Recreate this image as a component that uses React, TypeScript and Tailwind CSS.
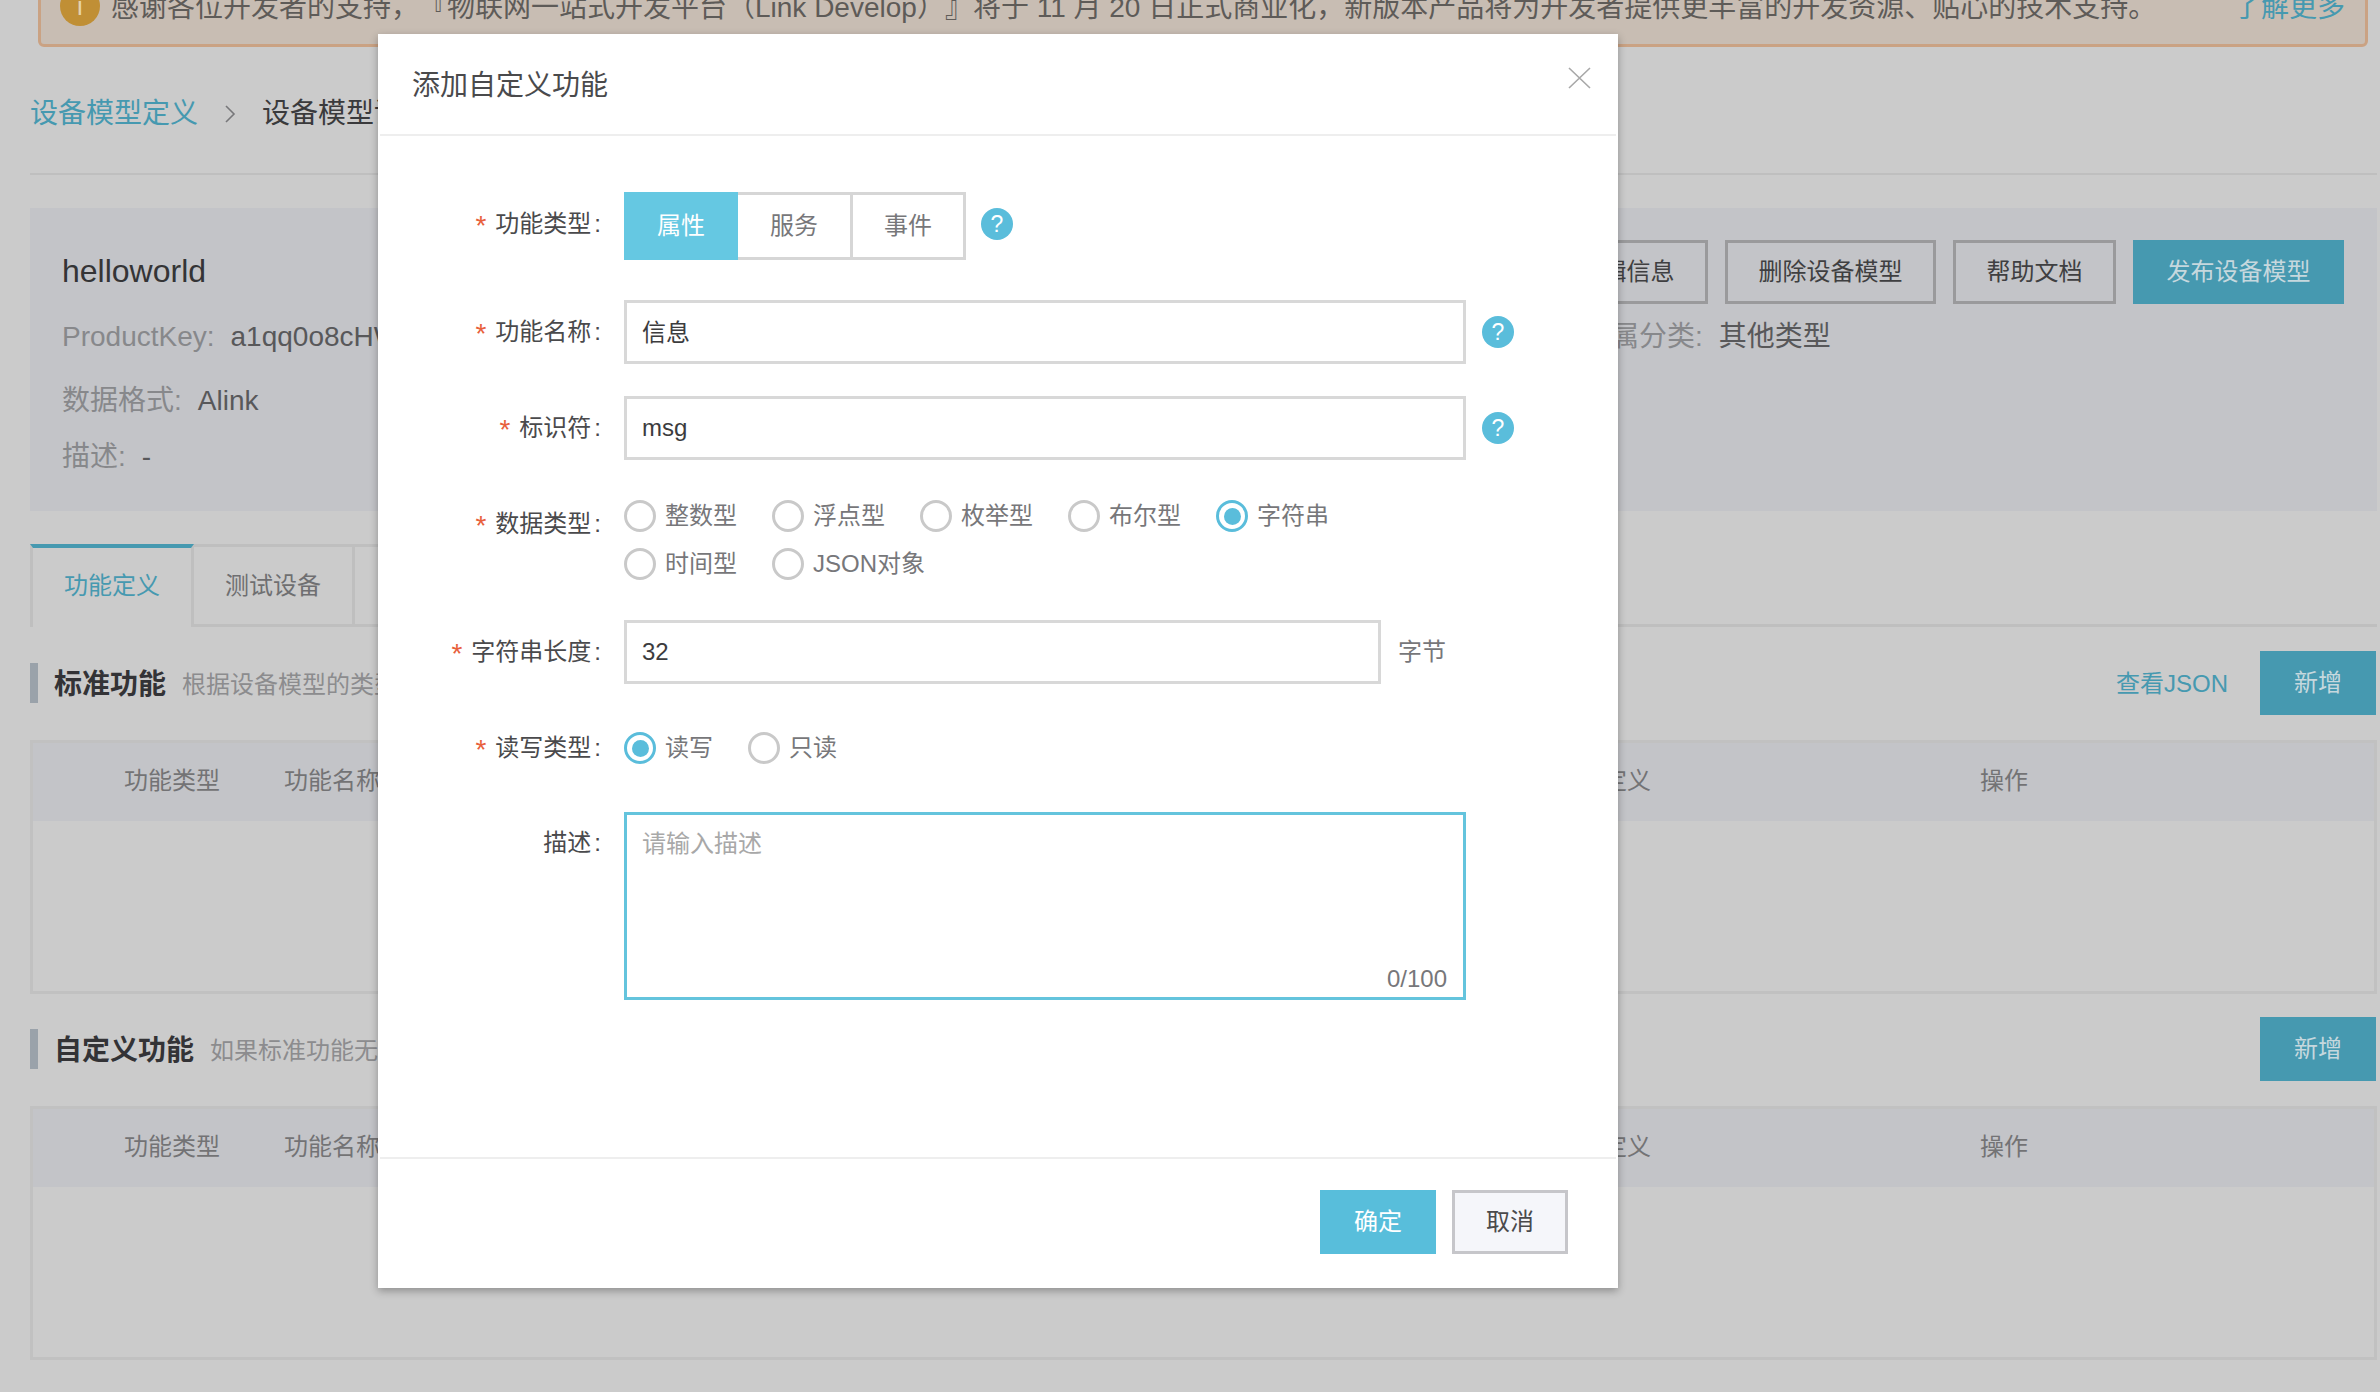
import React from "react";

const Star = () => <span className="mr-[9px] text-[28px] leading-[28px] pt-[4px] text-[#e8603c]">*</span>;

function FormRow({ label, required, labelClass, className, children }: { label: string; required?: boolean; labelClass: string; className: string; children: React.ReactNode }) {
  return (
    <div className={`flex items-start ${className}`}>
      <div className={`flex w-[246px] shrink-0 items-center justify-end pr-[23px] text-[24px] text-[#4a4a4c] ${labelClass}`}>
        {required && <Star />}
        <span>{label}</span>
        <span className="ml-[3px]">:</span>
      </div>
      {children}
    </div>
  );
}

function Help({ className }: { className: string }) {
  return <div className={`flex h-[32px] w-[32px] shrink-0 items-center justify-center rounded-full bg-[#5abddb] text-[23px] leading-none text-white ${className}`}>?</div>;
}

function Radio({ label, checked, className }: { label: string; checked?: boolean; className: string }) {
  return (
    <label className={`flex h-[32px] items-center ${className}`}>
      <span className={`flex h-[32px] w-[32px] shrink-0 items-center justify-center rounded-full border-[3px] ${checked ? "border-[#5abddb]" : "border-[#c9c9c9]"}`}>
        {checked && <span className="h-[17px] w-[17px] rounded-full bg-[#5abddb]" />}
      </span>
      <span className="ml-[9px] whitespace-nowrap text-[24px] text-[#77777a]">{label}</span>
    </label>
  );
}

function Section({ title, sub, link, titleClass, subClass, rootClass }: { title: string; sub: string; link?: boolean; titleClass: string; subClass: string; rootClass: string }) {
  const headers: [string, string][] = [
    ["功能类型", "w-[160px]"],
    ["功能名称", "w-[401px]"],
    ["标识符", "w-[435px]"],
    ["数据类型", "w-[435px]"],
    ["数据定义", "w-[425px]"],
    ["操作", "w-[100px]"],
  ];
  return (
    <section className={rootClass}>
      <div className="flex h-[64px] items-center">
        <div className="h-[40px] w-[8px] bg-[#9aa2aa]" />
        <h2 className={`pt-[3px] text-[28px] font-bold text-[#333336] ${titleClass}`}>{title}</h2>
        <span className={`pt-[3px] text-[24px] text-[#8c8c8e] ${subClass}`}>{sub}</span>
        <div className="ml-auto flex items-center">
          {link && <a className="mr-[32px] pt-[1px] text-[24px] text-[#4699b0]">查看JSON</a>}
          <button className="mr-[1px] h-[64px] w-[116px] bg-[#4699b0] text-[24px] text-[#c6d8de]">新增</button>
        </div>
      </div>
      <div className="mt-[25px] h-[254px] border-[3px] border-[#c1c1c1]">
        <div className="flex h-[78px] items-center bg-[#c3c4c8] pb-[3px] pl-[91px] text-[24px] text-[#737375]">
          {headers.map(([h, w]) => (
            <div key={h} className={`shrink-0 ${w}`}>{h}</div>
          ))}
        </div>
      </div>
    </section>
  );
}

export default function App() {
  return (
    <div className="relative h-[1392px] w-[2380px] overflow-hidden bg-[#cbcbcb] font-['Liberation_Sans','Noto_Sans_CJK_SC',sans-serif] [text-spacing-trim:space-all]">
      <div className="pl-[30px] pr-[3px]">
        <div className="ml-[8px] mr-[9px] -mt-[30px] flex h-[77px] items-center rounded-[6px] border-[3px] border-[#caa283] bg-[#c8bdb3] pb-[5px] pl-[19px] pr-[20px] text-[28px] text-[#5e5b58]">
          <div className="flex h-[40px] w-[40px] shrink-0 items-center justify-center rounded-full bg-[#c08f35] text-[26px] text-[#e6d3ae]">i</div>
          <span className="ml-[11px] whitespace-nowrap pt-[3px]">感谢各位开发者的支持，『物联网一站式开发平台（Link Develop）』将于 11 月 20 日正式商业化，新版本产品将为开发者提供更丰富的开发资源、贴心的技术支持。</span>
          <a className="ml-auto pt-[3px] text-[#4699b0]">了解更多</a>
        </div>

        <div className="flex h-[128px] items-center border-b-[2px] border-[#bfbfbf] pt-[8px] text-[28px]">
          <a className="text-[#4699b0]">设备模型定义</a>
          <svg className="ml-[26px] mr-[26px] h-[20px] w-[12px]" viewBox="0 0 12 20" fill="none" stroke="#77777a" strokeWidth="1.6"><path d="M2 2l8 8-8 8" /></svg>
          <span className="text-[#3a3a3c]">设备模型详情</span>
        </div>

        <div className="mt-[33px] flex h-[303px] justify-between bg-[#c3c4c8] pl-[32px] pr-[33px]">
          <div className="text-[28px] text-[#87888b]">
            <div className="mt-[46px] text-[32px] leading-[34px] text-[#343436]">helloworld</div>
            <div className="mt-[33px] leading-[32px]">ProductKey:<span className="ml-[16px] text-[#58585a]">a1qq0o8cHWk</span></div>
            <div className="mt-[32px] leading-[32px]">数据格式:<span className="ml-[16px] text-[#58585a]">Alink</span></div>
            <div className="mt-[24px] leading-[32px]">描述:<span className="ml-[16px] text-[#58585a]">-</span></div>
          </div>
          <div className="pt-[32px]">
            <div className="flex gap-[17px] text-[24px] text-[#3f3f41]">
              <button className="h-[64px] w-[163px] border-[3px] border-[#9a9a9c]">编辑信息</button>
              <button className="h-[64px] w-[211px] border-[3px] border-[#9a9a9c]">删除设备模型</button>
              <button className="h-[64px] w-[163px] border-[3px] border-[#9a9a9c]">帮助文档</button>
              <button className="h-[64px] w-[211px] bg-[#4699b0] text-[#c6d8de]">发布设备模型</button>
            </div>
            <div className="ml-[38px] mt-[17px] text-[28px] leading-[32px] text-[#87888b]">所属分类:<span className="ml-[16px] text-[#58585a]">其他类型</span></div>
          </div>
        </div>

        <div className="mt-[33px] flex h-[83px] border-b-[3px] border-[#bfbfbf] text-[24px]">
          <div className="flex h-[83px] w-[164px] items-center justify-center border-x-[3px] border-t-[4px] border-x-[#bfbfbf] border-t-[#4699b0] bg-[#cbcbcb] pb-[3px] text-[#4699b0]">功能定义</div>
          <div className="flex h-[80px] w-[161px] items-center justify-center border-r-[3px] border-t-[3px] border-[#bfbfbf] text-[#6f6f71]">测试设备</div>
          <div className="flex h-[80px] w-[161px] items-center justify-center border-r-[3px] border-t-[3px] border-[#bfbfbf] text-[#6f6f71]">运行状态</div>
        </div>

        <Section rootClass="mt-[24px]" title="标准功能" sub="根据设备模型的类型自动生成的功能" link titleClass="ml-[16px]" subClass="ml-[16px]" />
        <Section rootClass="mt-[23px]" title="自定义功能" sub="如果标准功能无法满足需求，可以添加自定义功能" titleClass="ml-[16px]" subClass="ml-[16px]" />
      </div>

      {/* dialog over the page */}
      <div className="absolute left-[378px] top-[34px] flex h-[1254px] w-[1240px] flex-col bg-white shadow-[0_3px_8px_rgba(0,0,0,0.3)]">
        <div className="relative mx-[2px] flex h-[102px] shrink-0 items-center border-b-[2px] border-[#eeeeee] pl-[32px] pt-[3px] text-[28px] text-[#4a4a4c]">
          添加自定义功能
          <svg className="absolute right-[25px] top-[33px] h-[22px] w-[23px]" viewBox="0 0 23 22" fill="none" stroke="#a8a8a8" strokeWidth="1.6"><path d="M1 1l21 20M22 1L1 21" /></svg>
        </div>

        <div className="flex-1 pt-[56px]">
          <FormRow label="功能类型" required labelClass="h-[64px]" className="">
            <div className="flex h-[68px] text-[24px] text-[#77777a]">
              <div className="flex w-[114px] items-center justify-center bg-[#65c8e2] text-white">属性</div>
              <div className="flex w-[115px] items-center justify-center border-y-[3px] border-r-[3px] border-[#d6d6d6]">服务</div>
              <div className="flex w-[113px] items-center justify-center border-y-[3px] border-r-[3px] border-[#d6d6d6]">事件</div>
            </div>
            <Help className="ml-[15px] mt-[16px]" />
          </FormRow>

          <FormRow label="功能名称" required labelClass="h-[64px]" className="mt-[40px]">
            <input defaultValue="信息" className="h-[64px] w-[842px] border-[3px] border-[#d8d8d8] pb-[3px] pl-[15px] text-[24px] text-[#3c3c3e] outline-none" />
            <Help className="ml-[16px] mt-[16px]" />
          </FormRow>

          <FormRow label="标识符" required labelClass="h-[64px]" className="mt-[32px]">
            <input defaultValue="msg" className="h-[64px] w-[842px] border-[3px] border-[#d8d8d8] pl-[15px] text-[24px] text-[#3c3c3e] outline-none" />
            <Help className="ml-[16px] mt-[16px]" />
          </FormRow>

          <FormRow label="数据类型" required labelClass="h-[48px]" className="mt-[40px]">
            <div className="flex w-[760px] flex-wrap gap-y-[16px]">
              <Radio label="整数型" className="w-[148px]" />
              <Radio label="浮点型" className="w-[148px]" />
              <Radio label="枚举型" className="w-[148px]" />
              <Radio label="布尔型" className="w-[148px]" />
              <Radio label="字符串" checked className="w-[148px]" />
              <Radio label="时间型" className="w-[148px]" />
              <Radio label="JSON对象" className="w-[148px]" />
            </div>
          </FormRow>

          <FormRow label="字符串长度" required labelClass="h-[64px]" className="mt-[40px]">
            <input defaultValue="32" className="h-[64px] w-[757px] border-[3px] border-[#d8d8d8] pl-[15px] text-[24px] text-[#3c3c3e] outline-none" />
            <span className="ml-[17px] text-[24px] leading-[64px] text-[#77777a]">字节</span>
          </FormRow>

          <FormRow label="读写类型" required labelClass="h-[32px]" className="mt-[48px]">
            <Radio label="读写" checked className="w-[124px]" />
            <Radio label="只读" className="w-[124px]" />
          </FormRow>

          <FormRow label="描述" labelClass="h-[62px]" className="mt-[48px]">
            <div className="relative h-[188px] w-[842px]">
              <textarea placeholder="请输入描述" className="h-full w-full resize-none border-[3px] border-[#64c4dd] px-[15px] py-[13px] text-[24px] leading-[32px] outline-none placeholder:text-[#a8a8a8]" />
              <span className="absolute bottom-[3px] right-[19px] text-[24px] text-[#77777a]">0/100</span>
            </div>
          </FormRow>
        </div>

        <div className="mx-[2px] flex h-[131px] shrink-0 justify-end gap-[16px] border-t-[2px] border-[#eeeeee] pr-[48px] pt-[31px] text-[24px]">
          <button className="h-[64px] w-[116px] bg-[#58bedb] text-white">确定</button>
          <button className="h-[64px] w-[116px] border-[3px] border-[#c6c6ca] bg-[#f5f6fa] text-[#4a4a4c]">取消</button>
        </div>
      </div>
    </div>
  );
}
